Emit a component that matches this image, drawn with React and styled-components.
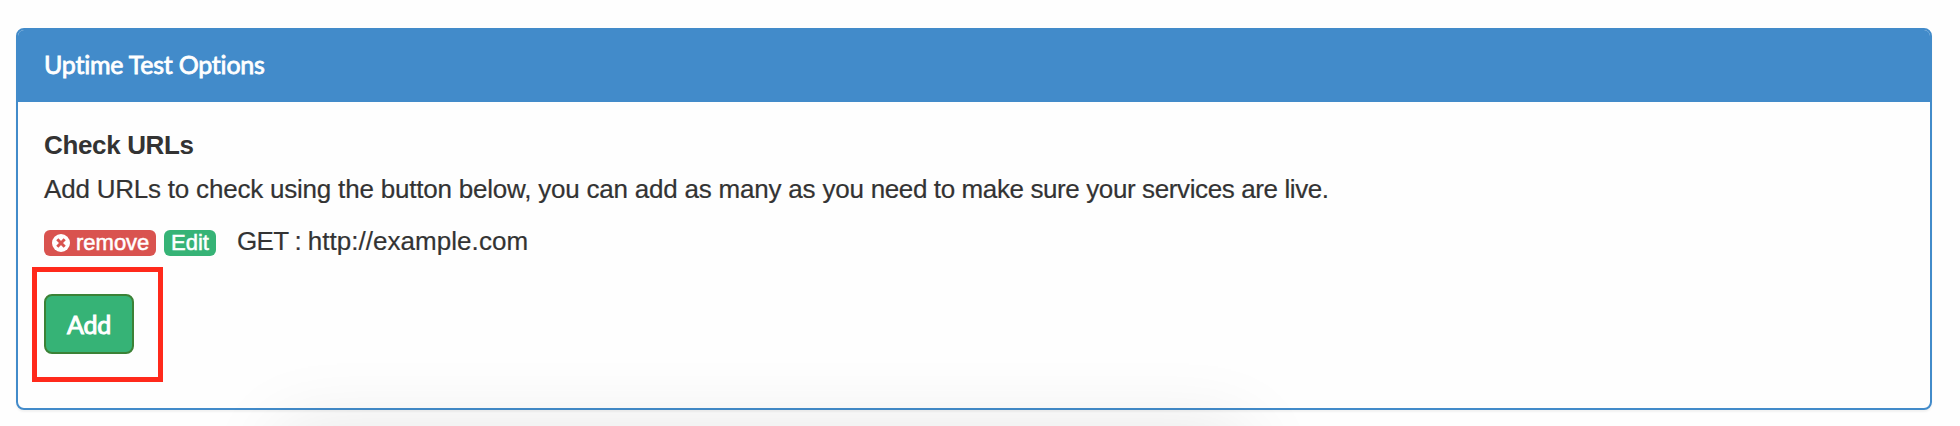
import React from 'react';
import styled, { createGlobalStyle } from 'styled-components';

const GlobalStyle = createGlobalStyle`
  * { box-sizing: border-box; }
  body {
    margin: 0;
    background: #fefefe;
    color: #333;
    font: 26px/38px "Liberation Sans", Helvetica, Arial, sans-serif;
  }
`;

const Page = styled.main`
  position: relative;
  height: 426px;
  padding: 28px 28px 16px 16px;
  overflow: hidden;
`;

const Panel = styled.section`
  height: 382px;
  border: 2px solid #428bca;
  border-radius: 8px;
  background: #fefefe;
  box-shadow: 0 2px 2px rgba(0, 0, 0, 0.05);
`;

const PanelHeading = styled.header`
  height: 72px;
  padding: 15px 26px;
  border-radius: 6px 6px 0 0;
  background: #428bca;
`;

const PanelTitle = styled.h3`
  margin: 0;
  color: #fff;
  font: 400 25px/38px Lato, sans-serif;
  letter-spacing: -0.22px;
  -webkit-text-stroke: 0.8px #fff;
`;

const PanelBody = styled.div`
  display: flex;
  flex-direction: column;
  align-items: flex-start;
  padding: 24px 26px;
`;

const FieldLabel = styled.strong`
  line-height: 38px;
  letter-spacing: -0.35px;
`;

const HelpText = styled.p`
  margin: 6px 0 14px;
  white-space: nowrap;
  -webkit-text-stroke: 0.2px #333;
`;

const Tracked = styled.span`
  letter-spacing: ${({ $spacing }) => $spacing}px;
`;

const UrlRow = styled.div`
  display: flex;
  align-items: center;
  height: 38px;
`;

const Tag = styled.a`
  display: flex;
  align-items: center;
  width: ${({ $width }) => $width}px;
  height: 26px;
  margin: 4px 8px 0 0;
  padding-left: 7px;
  border-radius: 6px;
  background: ${({ $color }) => $color};
  color: #fff;
  font-size: 22px;
  line-height: 26px;
  white-space: nowrap;
  -webkit-text-stroke: 0.5px #fff;
`;

const RemoveIcon = styled.svg`
  flex: none;
  width: 18px;
  height: 18px;
  margin: 0 6px 0 1px;
`;

const Url = styled.span`
  margin-left: 13px;
  white-space: pre;
  -webkit-text-stroke: 0.2px #333;
`;

const AddButton = styled.button`
  position: relative;
  width: 90px;
  height: 60px;
  margin-top: 34px;
  padding: 0;
  border: 2px solid #3b8236;
  border-radius: 8px;
  background: #36b376;
  color: #fff;
  font: 400 25px/38px Lato, sans-serif;
  letter-spacing: -0.2px;
  -webkit-text-stroke: 1px #fff;
`;

const Highlight = styled.span`
  position: absolute;
  top: -29px;
  left: -14px;
  width: 131px;
  height: 115px;
  border: 5px solid #ff291b;
  pointer-events: none;
`;

const WindowShadow = styled.div`
  position: absolute;
  top: 430px;
  left: 280px;
  width: 966px;
  height: 300px;
  box-shadow: 0 0 72px rgba(0, 0, 0, 0.1);
  pointer-events: none;
`;

export default function App() {
  return (
    <>
      <GlobalStyle />
      <Page>
        <Panel>
          <PanelHeading>
            <PanelTitle>Uptime Test Options</PanelTitle>
          </PanelHeading>
          <PanelBody>
            <FieldLabel>Check URLs</FieldLabel>
            <HelpText>
              <Tracked $spacing={-0.21}>Add URLs to check using the button below, you can add as many as you </Tracked>
              <Tracked $spacing={-0.39}>need to make sure your services are live.</Tracked>
            </HelpText>
            <UrlRow>
              <Tag $width={112} $color="#d9534f">
                <RemoveIcon viewBox="0 0 18 18" aria-hidden="true">
                  <circle cx="9" cy="9" r="9" fill="#fff" />
                  <path d="M5.3 5.3l7.4 7.4M12.7 5.3l-7.4 7.4" stroke="#d9534f" strokeWidth="3" />
                </RemoveIcon>
                remove
              </Tag>
              <Tag $width={52} $color="#36b376">Edit</Tag>
              <Url>
                <Tracked $spacing={-0.65}>GET : </Tracked>
                <Tracked $spacing={0.04}>http://example.com</Tracked>
              </Url>
            </UrlRow>
            <AddButton type="button">
              Add
              <Highlight />
            </AddButton>
          </PanelBody>
        </Panel>
        <WindowShadow />
      </Page>
    </>
  );
}
